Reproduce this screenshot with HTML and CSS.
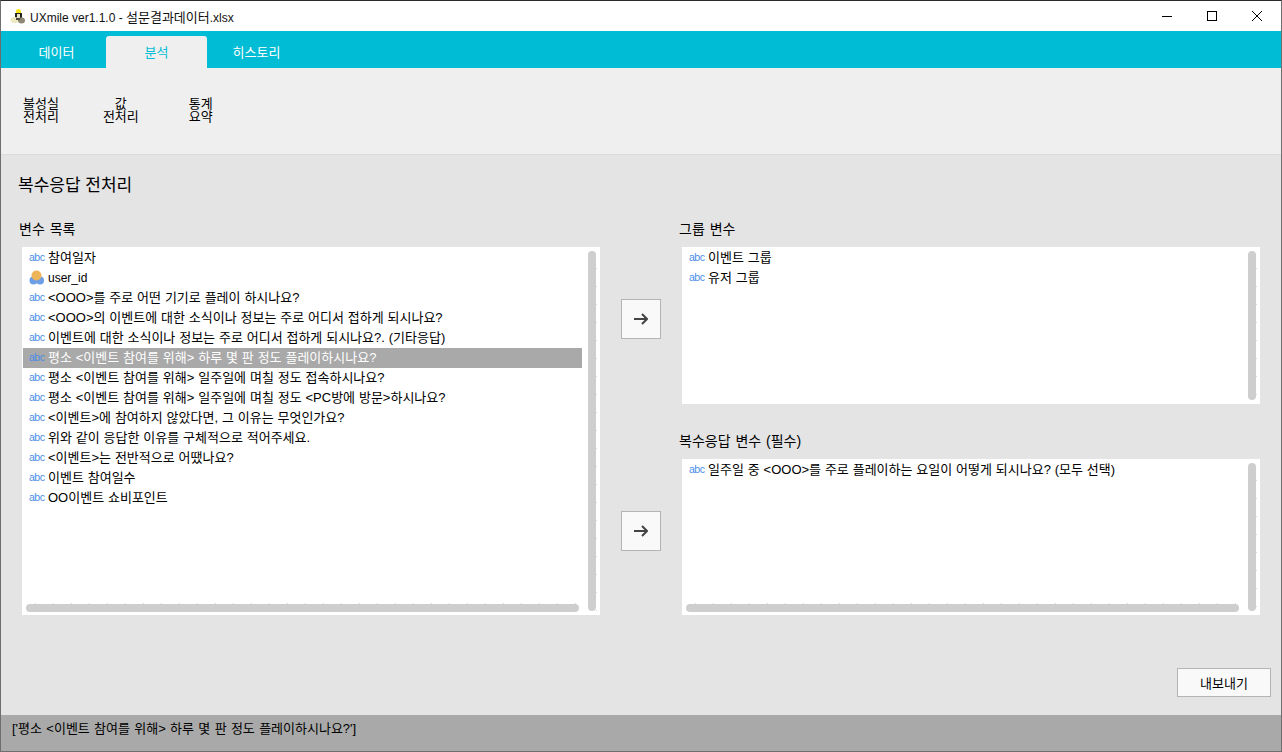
FILE: index.html
```html
<!DOCTYPE html>
<html lang="ko">
<head>
  <meta charset="UTF-8">
  <meta name="viewport" content="width=device-width, initial-scale=1.0">
  <title>UXmile</title>
  <link rel="stylesheet" href="styles.css">
</head>
<body>
  <div class="window">
    <header class="titlebar">
      <svg class="app-icon" width="16" height="16" viewBox="0 0 16 16">
        <path d="M6 6V3q0-2 2.500-2T11 3v3z" fill="#f7e419"/>
        <path d="M5 5h7v6H5z" fill="#26241c"/>
        <path d="M7 6h3v4H7z" fill="#e9e4cf"/>
        <ellipse cx="4.500" cy="12" rx="4" ry="3" fill="#ece8c0"/>
        <ellipse cx="11.500" cy="12.500" rx="3.500" ry="3" fill="#8d8672"/>
        <rect x="6" y="10" width="4" height="2" fill="#4a463a"/>
      </svg>
      <span class="title-text">UXmile ver1.1.0 - <span class="title-ko">설문결과데이터</span>.xlsx</span>
      <div class="win-controls">
        <svg width="10" height="10" viewBox="0 0 10 10"><path d="M0 5.500h10" stroke="#000" fill="none"/></svg>
        <svg width="10" height="10" viewBox="0 0 10 10"><rect x=".5" y=".5" width="9" height="9" stroke="#000" fill="none"/></svg>
        <svg width="10" height="10" viewBox="0 0 10 10"><path d="M0 0l10 10M10 0L0 10" stroke="#000" fill="none"/></svg>
      </div>
    </header>

    <nav class="tabs">
      <a class="tab first-tab">데이터</a>
      <a class="tab active">분석</a>
      <a class="tab last-tab">히스토리</a>
    </nav>

    <section class="ribbon">
      <div class="tool tool-1">불성실<br>전처리</div>
      <div class="tool tool-2">값<br>전처리</div>
      <div class="tool tool-3">통계<br>요약</div>
    </section>

    <main class="content">
      <h2 class="page-title">복수응답 전처리</h2>
      <div class="columns">
        <div class="col-left">
          <div class="field-label">변수 목록</div>
          <div class="listbox big">
            <ul>
              <li><span class="abc">abc</span>참여일자</li>
              <li>
                <svg class="nominal" width="16" height="16" viewBox="0 0 16 16">
                  <circle cx="4.500" cy="11.500" r="4" fill="#6c9fe6"/>
                  <circle cx="11" cy="11.500" r="4" fill="#6c9fe6"/>
                  <circle cx="7.500" cy="6.500" r="5" fill="#eeb45a"/>
                </svg><span class="latin">user_id</span></li>
              <li><span class="abc">abc</span>&lt;OOO&gt;를 주로 어떤 기기로 플레이 하시나요?</li>
              <li><span class="abc">abc</span>&lt;OOO&gt;의 이벤트에 대한 소식이나 정보는 주로 어디서 접하게 되시나요?</li>
              <li><span class="abc">abc</span>이벤트에 대한 소식이나 정보는 주로 어디서 접하게 되시나요?. (기타응답)</li>
              <li class="selected"><span class="abc">abc</span>평소 &lt;이벤트 참여를 위해&gt; 하루 몇 판 정도 플레이하시나요?</li>
              <li><span class="abc">abc</span>평소 &lt;이벤트 참여를 위해&gt; 일주일에 며칠 정도 접속하시나요?</li>
              <li><span class="abc">abc</span>평소 &lt;이벤트 참여를 위해&gt; 일주일에 며칠 정도 &lt;PC방에 방문&gt;하시나요?</li>
              <li><span class="abc">abc</span>&lt;이벤트&gt;에 참여하지 않았다면, 그 이유는 무엇인가요?</li>
              <li><span class="abc">abc</span>위와 같이 응답한 이유를 구체적으로 적어주세요.</li>
              <li><span class="abc">abc</span>&lt;이벤트&gt;는 전반적으로 어땠나요?</li>
              <li><span class="abc">abc</span>이벤트 참여일수</li>
              <li><span class="abc">abc</span>OO이벤트 쇼비포인트</li>
            </ul>
            <div class="vbar"></div>
            <div class="hbar"></div>
          </div>
        </div>

        <div class="col-mid">
          <button class="arrow-btn first">
            <svg width="14" height="12" viewBox="0 0 14 12"><path d="M0 6h13M8 1l5 5-5 5" stroke="#444" stroke-width="2" fill="none"/></svg>
          </button>
          <button class="arrow-btn second">
            <svg width="14" height="12" viewBox="0 0 14 12"><path d="M0 6h13M8 1l5 5-5 5" stroke="#444" stroke-width="2" fill="none"/></svg>
          </button>
        </div>

        <div class="col-right">
          <div class="field-label">그룹 변수</div>
          <div class="listbox small">
            <ul>
              <li><span class="abc">abc</span>이벤트 그룹</li>
              <li><span class="abc">abc</span>유저 그룹</li>
            </ul>
            <div class="vbar"></div>
          </div>
          <div class="field-label second-label">복수응답 변수 (필수)</div>
          <div class="listbox medium">
            <ul>
              <li><span class="abc">abc</span>일주일 중 &lt;OOO&gt;를 주로 플레이하는 요일이 어떻게 되시나요? (모두 선택)</li>
            </ul>
            <div class="vbar"></div>
            <div class="hbar"></div>
          </div>
        </div>
      </div>
      <div class="actions">
        <button class="export-btn">내보내기</button>
      </div>
    </main>

    <footer class="statusbar">['평소 &lt;이벤트 참여를 위해&gt; 하루 몇 판 정도 플레이하시나요?']</footer>
  </div>
</body>
</html>
```

FILE: styles.css
```css
* {
  box-sizing: border-box;
}
html, body {
  margin: 0;
  padding: 0;
  height: 100%;
  overflow: hidden;
}
body {
  font-family: "Liberation Sans", "Noto Sans CJK KR", sans-serif;
  font-size: 13px;
  color: #000;
}
.window {
  display: flex;
  flex-direction: column;
  height: 752px;
  border: 1px solid #6e6e6e;
  border-top-color: #2b2b2b;
  background: #e4e4e4;
}

/* title bar */
.titlebar {
  display: flex;
  align-items: center;
  height: 30px;
  padding-left: 9px;
  background: #fff;
}
.app-icon {
  margin-right: 4px;
}
.title-text {
  font-size: 12px;
  color: #111;
}
.title-ko {
  font-size: 13px;
}
.win-controls {
  display: flex;
  gap: 35px;
  margin-left: auto;
  padding-right: 19px;
}

/* tabs */
.tabs {
  display: flex;
  height: 37px;
  padding-top: 5px;
  background: #00bcd4;
}
.tab {
  display: flex;
  align-items: center;
  justify-content: center;
  width: 105px;
  padding-bottom: 2px;
  color: #fff;
  font-size: 13px;
}
.first-tab {
  padding-left: 6px;
}
.last-tab {
  padding-right: 6px;
}
.tab.active {
  width: 101px;
  background: #efefef;
  color: #00bcd4;
  border-radius: 3px 3px 0 0;
}

/* ribbon */
.ribbon {
  display: flex;
  height: 87px;
  background: #efefef;
  border-bottom: 1px solid #dcdcdc;
  padding-top: 29px;
}
.tool {
  font-size: 13px;
  line-height: 13px;
  text-align: center;
}
.tool-1 {
  margin-left: 22px;
}
.tool-2 {
  margin-left: 44px;
}
.tool-3 {
  margin-left: 50px;
}

/* main content */
.content {
  flex: 1;
  display: flex;
  flex-direction: column;
  padding: 0 10px 18px 21px;
}
.page-title {
  margin: 21px 0 0 -4px;
  height: 20px;
  font-size: 17px;
  line-height: 20px;
  font-weight: normal;
}
.columns {
  display: flex;
  margin-top: 25px;
}
.field-label {
  height: 26px;
  margin-left: -3px;
  font-size: 14px;
  line-height: 16px;
  word-spacing: 1px;
}
.second-label {
  margin-top: 29px;
}
.col-left, .col-right {
  width: 578px;
}
.col-mid {
  display: flex;
  flex-direction: column;
  width: 82px;
  padding: 78px 0 0 21px;
}
.arrow-btn {
  display: flex;
  align-items: center;
  justify-content: center;
  width: 40px;
  height: 40px;
  padding: 0;
  background: #f9f9f9;
  border: 1px solid #b4b4b4;
}
.arrow-btn.second {
  margin-top: 172px;
}

/* lists */
.listbox {
  position: relative;
  background: #fff;
  overflow: hidden;
}
.listbox.big {
  height: 368px;
}
.listbox.small {
  height: 157px;
}
.listbox.medium {
  height: 156px;
}
.listbox ul {
  margin: 0;
  padding: 1px 18px 0 1px;
  list-style: none;
}
.listbox li {
  display: flex;
  align-items: center;
  height: 20px;
  padding-left: 6px;
  padding-bottom: 4px;
  white-space: nowrap;
  word-spacing: .25px;
}
.listbox li.selected {
  background: #a9a9a9;
  color: #fff;
}
.abc {
  width: 19px;
  padding-top: 1px;
  color: #4a8ce8;
  font-size: 10.500px;
  letter-spacing: -.5px;
  font-family: "Liberation Sans", sans-serif;
}
.latin {
  padding-top: 4px;
  font-size: 12px;
}
.nominal {
  margin-top: 2px;
  margin-right: 3px;
}
.vbar {
  position: absolute;
  top: 4px;
  right: 4px;
  bottom: 4px;
  width: 8px;
  border-radius: 4px;
  background: #cecece;
}
.vbar::after {
  content: "";
  position: absolute;
  top: 0;
  bottom: 0;
  right: -1px;
  width: 1px;
  background: repeating-linear-gradient(to bottom, transparent 0 17px, #d8d8d8 17px 18px);
}
.hbar {
  position: absolute;
  left: 4px;
  right: 21px;
  bottom: 3px;
  height: 8px;
  border-radius: 4px;
  background: #cecece;
}
.hbar::after {
  content: "";
  position: absolute;
  left: 0;
  right: 0;
  top: -1px;
  height: 1px;
  background: repeating-linear-gradient(to right, transparent 0 9px, #d8d8d8 9px 10px, transparent 10px 18px);
}

/* bottom */
.actions {
  display: flex;
  justify-content: flex-end;
  margin-top: 53px;
}
.export-btn {
  width: 94px;
  height: 29px;
  padding: 0;
  background: #f9f9f9;
  border: 1px solid #b4b4b4;
  font-family: inherit;
  font-size: 13px;
}
.statusbar {
  display: flex;
  align-items: center;
  height: 36px;
  padding-left: 11px;
  padding-bottom: 11px;
  background: #a9a9a9;
  font-size: 13px;
  word-spacing: .7px;
}
```
